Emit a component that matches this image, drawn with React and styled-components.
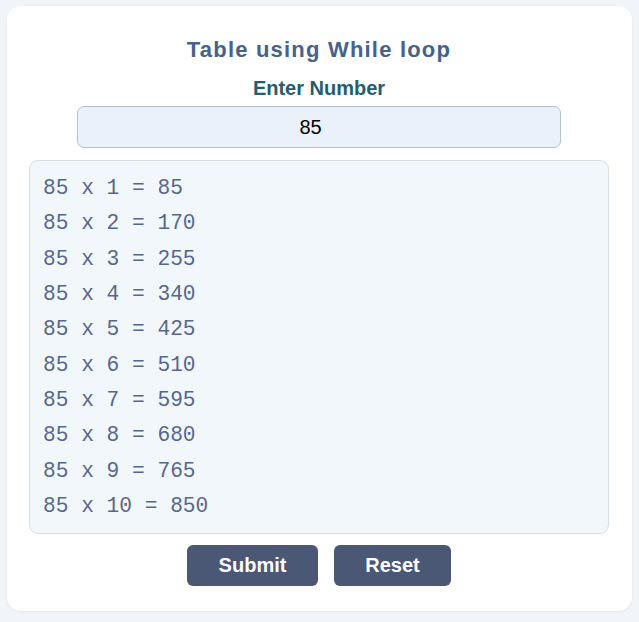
import React, { useState } from "react";
import styled, { createGlobalStyle } from "styled-components";

const Global = createGlobalStyle`
  html, body { margin: 0; padding: 0; background: #f1f5f9; }
  body { font-family: "Liberation Sans", Arial, sans-serif; }
  * { box-sizing: border-box; }
`;

const Page = styled.div`
  padding: 6px 7px 11px 7px;
`;

const Card = styled.div`
  background: #ffffff;
  border-radius: 14px;
  padding: 31px 23px 25px 22px;
  display: flex;
  flex-direction: column;
  align-items: center;
  box-shadow: 0 1px 3px rgba(30, 50, 80, 0.06);
`;

const Title = styled.h1`
  margin: 0;
  font-size: 22px;
  line-height: 26px;
  font-weight: 700;
  letter-spacing: 1.2px;
  color: #46628a;
`;

const Label = styled.label`
  margin-top: 14px;
  font-size: 20px;
  line-height: 23px;
  font-weight: 700;
  color: #245d6c;
`;

const Input = styled.input`
  margin-top: 6px;
  width: 484px;
  height: 42px;
  border: 1px solid #b7c1ce;
  border-radius: 7px;
  background: #eaf1fa;
  padding: 0 19px 0 2px;
  font-family: "Liberation Sans", Arial, sans-serif;
  font-size: 20px;
  text-align: center;
  color: #000;
  outline: none;
`;

const Output = styled.div`
  margin-top: 12px;
  align-self: stretch;
  height: 374px;
  background: #f2f7fb;
  border: 1px solid #d8dee6;
  border-radius: 9px;
  padding: 10px 14px 10px 13px;
`;

const Line = styled.div`
  font-family: "Liberation Mono", "Courier New", monospace;
  font-size: 21.2px;
  line-height: 35.33px;
  color: #56678e;
  white-space: pre;
`;

const Buttons = styled.div`
  margin-top: 11px;
  display: flex;
  gap: 16px;
`;

const Button = styled.button`
  width: ${(p) => p.$w}px;
  height: 41px;
  border: none;
  border-radius: 6px;
  background: #4a5775;
  color: #ffffff;
  font-family: "Liberation Sans", Arial, sans-serif;
  font-size: 20px;
  font-weight: 700;
  cursor: pointer;
`;

export default function App() {
  const [num, setNum] = useState("85");
  const n = Number(num) || 0;
  const lines = [];
  let i = 1;
  while (i <= 10) {
    lines.push(`${n} x ${i} = ${n * i}`);
    i++;
  }
  return (
    <>
      <Global />
      <Page>
        <Card>
          <Title>Table using While loop</Title>
          <Label htmlFor="num">Enter Number</Label>
          <Input id="num" value={num} onChange={(e) => setNum(e.target.value)} />
          <Output>
            {lines.map((l) => (
              <Line key={l}>{l}</Line>
            ))}
          </Output>
          <Buttons>
            <Button $w={131}>Submit</Button>
            <Button $w={117}>Reset</Button>
          </Buttons>
        </Card>
      </Page>
    </>
  );
}
